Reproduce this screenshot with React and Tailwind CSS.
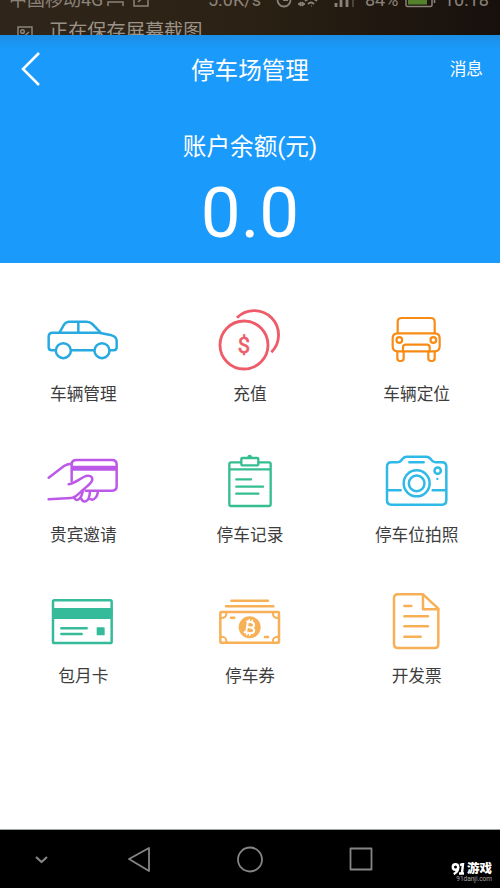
import React from 'react';

const CarSide = () => (
  <svg viewBox="40 15 240 210" className="w-20 h-[70px]" fill="none" stroke="#28aae1" strokeWidth="7.500" strokeLinecap="round" strokeLinejoin="round">
    <path d="M77 151H66q-9 0-9-9v-32q0-12 12-12h139l38 8q15 4 15 17v19q0 9-9 9h-12M125 151h67" />
    <path d="M90 97l13-23q6-9 16-9h52q10 0 17 7l25 26M146 65v33" />
    <circle cx="101" cy="152" r="22.500" />
    <circle cx="217" cy="152" r="22.500" />
  </svg>
);

const Coins = () => (
  <svg viewBox="30 15 240 210" className="w-20 h-[70px]" fill="none" stroke="#ee5c69" strokeWidth="8.500">
    <circle cx="132" cy="135" r="72" />
    <path d="M111 53A72 72 0 0 1 214 157" />
    <text x="132" y="158" textAnchor="middle" fontSize="66" fontFamily="Roboto, sans-serif" fill="#ee5c69" strokeWidth="2">$</text>
  </svg>
);

const CarFront = () => (
  <svg viewBox="20 15 240 210" className="w-20 h-[70px]" fill="none" stroke="#f78b14" strokeWidth="6.5" strokeLinejoin="round">
    <path d="M82 99V66q0-12 12-12h87q12 0 12 12v33" />
    <path d="M98 154H82q-15 0-15-15v-24q0-15 15-15h111q15 0 15 15v24q0 15-15 15h-15" />
    <path d="M98 154v-12q0-8 8-8h64q8 0 8 8v12z" />
    <circle cx="87" cy="120" r="8.500" />
    <circle cx="189" cy="120" r="8.500" />
    <path d="M81 155v20q0 8 8 8h3q8 0 8-8v-20M174 155v20q0 8 8 8h3q8 0 8-8v-20" />
  </svg>
);

const HandCard = () => (
  <svg viewBox="40 3 240 210" className="w-20 h-[70px]" fill="none" stroke="#bd59e8" strokeWidth="7.500" strokeLinecap="round" strokeLinejoin="round">
    <path d="M126 108V59q0-14 14-14h107q14 0 14 14v64q0 14-14 14h-79" />
    <path d="M126 70h135" strokeWidth="15" strokeLinecap="butt" />
    <path d="M57 98l46-35q9-6 21-7" />
    <path d="M117 118c17-4 30-14 45-22 12-6 25-5 26 6 1 10-12 19-24 29-15 12-25 27-40 28l-67 4" />
    <path d="M133 156q4 11 12 8 9-3 14-23M155 161q3 10 13 8 11-3 13-30M180 162q10 5 17-3 7-8 8-20" />
  </svg>
);

const Clipboard = () => (
  <svg viewBox="30 3 240 210" className="w-20 h-[70px]" fill="none" stroke="#35be91" strokeWidth="7" strokeLinecap="round" strokeLinejoin="round">
    <path d="M123 52H93q-5 0-5 5v121q0 5 5 5h114q5 0 5-5V57q0-5-5-5h-31M90 73h121" />
    <rect x="124" y="39" width="51" height="22" rx="3" />
    <path d="M142 37q0-8 7-8t7 8z" fill="#35be91" stroke="none" />
    <path d="M109 103h44M109 125h80M109 146h66" />
  </svg>
);

const Camera = () => (
  <svg viewBox="20 3 240 210" className="w-20 h-[70px]" fill="none" stroke="#2fb9e8" strokeWidth="7.500" strokeLinecap="round" strokeLinejoin="round">
    <path d="M63 52h18q7 0 12-6l4-5q5-6 12-6h59q7 0 12 6l4 5q5 6 12 6h19q13 0 13 13v101q0 13-13 13H63q-13 0-13-13V65q0-13 13-13z" />
    <path d="M117 52h43M51 136h40M187 136h40" />
    <circle cx="139" cy="115" r="39" />
    <circle cx="139" cy="115" r="23.500" />
    <circle cx="202" cy="77" r="9.500" />
    <circle cx="201" cy="102" r="3.500" fill="#2fb9e8" stroke="none" />
  </svg>
);

const CreditCard = () => (
  <svg viewBox="40 6 240 210" className="w-20 h-[70px]" fill="none" stroke="#36bb9a" strokeWidth="7.500" strokeLinecap="round" strokeLinejoin="round">
    <rect x="70" y="46" width="176" height="128" rx="4" />
    <path d="M68 69h180v33H68z" fill="#36bb9a" stroke="none" />
    <path d="M95 130h76M95 147h61" />
    <rect x="201" y="127" width="24" height="24" rx="2" fill="#36bb9a" stroke="none" />
  </svg>
);

const Banknote = () => (
  <svg viewBox="540 6 240 210" className="w-20 h-[70px]" fill="none" stroke="#f8b057" strokeWidth="7.500" strokeLinecap="round" strokeLinejoin="round">
    <path d="M604 47h110M588 64h142" />
    <rect x="571" y="81" width="176" height="92" rx="3" />
    <path d="M589 84q1 15-15 15M729 84q-1 15 15 15M574 155q16 0 15 15M744 155q-16 0-15 15" strokeWidth="6" />
    <path d="M603 98h10M705 156h9" />
    <circle cx="659" cy="127" r="33" fill="#f8b057" stroke="none" />
    <g stroke="#fff" strokeWidth="6" strokeLinecap="butt" transform="rotate(10 659 127)">
      <path d="M646 111h15q10 0 10 8t-10 8h-10M661 127q13 0 13 8.500t-13 8.500h-17M651 111v33" />
      <path d="M654 103v9M663 103v9M654 143v9M663 143v9" strokeWidth="4.500" />
    </g>
  </svg>
);

const Invoice = () => (
  <svg viewBox="20 6 240 210" className="w-20 h-[70px]" fill="none" stroke="#f8b057" strokeWidth="7.500" strokeLinecap="round" strokeLinejoin="round">
    <path d="M158 28H83q-12 0-12 12v137q0 12 12 12h109q12 0 12-12V71z" />
    <path d="M158 29v44h46" />
    <path d="M102 63h21M102 94h71M102 124h71M102 155h49" />
  </svg>
);

const menu = [
  { label: '车辆管理', Icon: CarSide },
  { label: '充值', Icon: Coins },
  { label: '车辆定位', Icon: CarFront },
  { label: '贵宾邀请', Icon: HandCard },
  { label: '停车记录', Icon: Clipboard },
  { label: '停车位拍照', Icon: Camera },
  { label: '包月卡', Icon: CreditCard },
  { label: '停车券', Icon: Banknote },
  { label: '开发票', Icon: Invoice },
];

const StatusBar = () => (
  <div className="h-[35px] overflow-hidden bg-linear-to-r from-[#30251a] via-[#2b2114] to-[#17100c] text-[#8b8379]">
    <div className="flex h-5 -mt-2.5 items-center text-[18px] leading-5">
      <span className="ml-[9px] w-[98px] whitespace-nowrap">中国移动4G</span>
      <svg viewBox="0 0 44 20" className="w-11 h-5 shrink-0" fill="none" stroke="currentColor" strokeWidth="1.500">
        <path d="M1 16v-4h15v4M27 4v12h14V4M31 12l8-7" />
      </svg>
      <span className="ml-[57px] w-[66px] whitespace-nowrap">5.0K/s</span>
      <svg viewBox="0 0 82 20" className="w-[82px] h-5 shrink-0" fill="none" stroke="currentColor" strokeWidth="1.800">
        <circle cx="10" cy="10" r="6.500" />
        <path d="M10 6v4h4M31 11q6-5 12 0M34 14q3-3 6 0" />
        <path d="M24 14l3-2v4zM31 14l-3-2v4zM37 16h1" fill="currentColor" strokeWidth="1" />
        <path d="M62 13v4M67 10v7M73 7v10" strokeWidth="2.800" />
        <path d="M79 5v12" strokeWidth="2" opacity="0.4" />
      </svg>
      <span className="ml-[9px] w-[39px] whitespace-nowrap">84%</span>
      <svg viewBox="0 0 32 20" className="w-8 h-5 shrink-0" fill="none" stroke="currentColor" strokeWidth="1.500">
        <rect x="2" y="4" width="26" height="12.500" rx="1.500" />
        <path d="M4 6h19v8.500H4z" fill="#54822c" stroke="none" />
        <path d="M30.500 8v5" />
      </svg>
      <span className="ml-2 whitespace-nowrap">10:18</span>
    </div>
    <div className="flex h-6 mt-2.5 items-center">
      <svg viewBox="0 0 16 16" className="ml-[17px] mt-1 size-4 shrink-0" fill="none" stroke="currentColor" strokeWidth="1.500">
        <path d="M1 1h14v14H1z" />
        <circle cx="5.500" cy="5.500" r="1.800" />
        <path d="M3 14l9-8M9 9l5 4" />
      </svg>
      <span className="ml-4 text-[19.2px] leading-6 text-[#9b9388]">正在保存屏幕截图</span>
    </div>
  </div>
);

const Header = () => (
  <header className="h-[228px] bg-[#1a9afb] bg-linear-to-b from-[#1c8de4] to-[#1a9afb] to-[14px] text-white">
    <div className="grid grid-cols-3 h-[68px] items-center">
      <svg viewBox="0 0 20 34" className="ml-[21px] w-5 h-[34px]" fill="none" stroke="#fff" strokeWidth="2.500">
        <path d="M18 1L2 17l16 16" />
      </svg>
      <h1 className="pt-[3px] text-center text-[23.6px] leading-7">停车场管理</h1>
      <span className="mr-[17px] pt-0.5 text-right text-[16.7px]">消息</span>
    </div>
    <p className="mt-[29px] text-center text-[23.6px] leading-[30px]">账户余额(元)</p>
    <p className="mt-[11px] text-center text-[71px] leading-[80px]">0.0</p>
  </header>
);

const NavBar = () => (
  <footer className="flex h-[59px] items-center border-t border-[#9ba5a0] bg-black">
    <svg viewBox="0 0 400 58" className="w-[400px] h-[58px] shrink-0" fill="none" stroke="#858585" strokeWidth="1.800" strokeLinejoin="round">
      <path d="M36 27l5.500 5 5.500-5" strokeWidth="2.200" />
      <path d="M149 18v23l-20-12z" />
      <circle cx="250" cy="29.500" r="12" />
      <rect x="350.500" y="18.500" width="21" height="21" />
    </svg>
    <div className="ml-auto mr-2 mt-7 text-right text-white">
      <div className="flex items-center justify-end gap-0.5 leading-3 font-black">
        <svg viewBox="0 0 14 12" className="w-3.5 h-3" fill="none" stroke="#fff" strokeWidth="2.400">
          <circle cx="4.500" cy="4" r="2.700" />
          <path d="M7.200 4q0 5-4.500 7M9 2l3-1-1 9M8 10.500h5" />
        </svg>
        <span className="text-[12.5px]">游戏</span>
      </div>
      <div className="mt-px text-[6.500px] leading-[7px] text-[#aaa]">91danji.com</div>
    </div>
  </footer>
);

export default function App() {
  return (
    <div className="flex flex-col w-[500px] h-[888px] overflow-hidden bg-white font-[Roboto,'Noto_Sans_CJK_SC',sans-serif]">
      <StatusBar />
      <Header />
      <main className="grid grid-cols-3 auto-rows-[141px] flex-1 content-start pt-[42px]">
        {menu.map(({ label, Icon }) => (
          <div key={label} className="flex flex-col items-center">
            <Icon />
            <span className="mt-2 text-[16.7px] leading-6 text-[#3d3d3d]">{label}</span>
          </div>
        ))}
      </main>
      <NavBar />
    </div>
  );
}
